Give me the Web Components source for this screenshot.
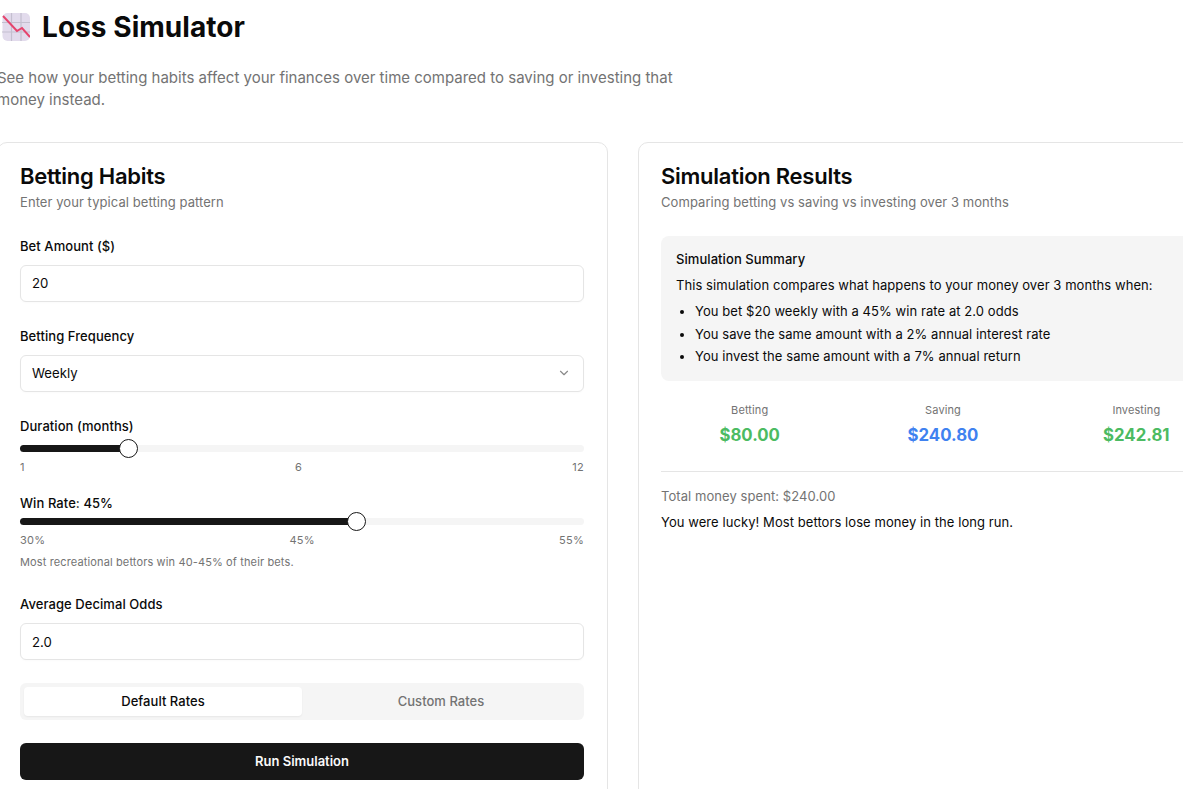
<!DOCTYPE html>
<html>
<head>
<meta charset="utf-8">
<title>Loss Simulator</title>
<style>
    html, body { margin: 0; padding: 0; background: #fff; overflow: hidden; height: 100%; }
    body { font-family: Inter, "Noto Sans", sans-serif; color: #0a0a0a; }
</style>
</head>
<body>
<loss-app></loss-app>

<script>
// small helper so every element below stays short
const shadow = (el, html) => {
    el.attachShadow({mode: 'open'}).innerHTML = html;
};

class LossHeader extends HTMLElement {
    constructor() {
        super();
        shadow(this, `
            <style>
                :host { display: block; }
                .title { display: flex; align-items: center; gap: 12px; height: 28px; padding-left: 5px; margin: 0; }
                h1 { font-size: 28px; line-height: 28px; font-weight: 700; margin: 0; letter-spacing: 0.05px; }
                svg { display: block; flex: none; }
                p { width: 700px; margin: 26px 0 0; font-size: 15px; line-height: 22px; color: #737373; }
            </style>
            <div class="title">
                <svg width="28" height="28" viewBox="0 0 28 28">
                    <rect x="0.5" y="0" width="27.5" height="28" rx="5" fill="#e2dbec"/>
                    <path d="M9.5 0V28M19 0V28M0 9.5H28M0 19H28" stroke="#c4bfcf" stroke-width="1.2"/>
                    <path d="M1 3L15 18L20 15L28 24" fill="none" stroke="#e5446d" stroke-width="2"/>
                </svg>
                <h1>Loss Simulator</h1>
            </div>
            <p>See how your betting habits affect your finances over time compared to saving or investing that money instead.</p>
        `);
    }
}

class LossCard extends HTMLElement {
    constructor() {
        super();
        shadow(this, `
            <style>
                :host { display: block; box-sizing: border-box; height: 720px; border: 1px solid #e5e5e5; border-radius: 10px; padding: 21px 23px 21px 22px; background: #fff; }
                h2 { font-size: 22px; line-height: 24px; font-weight: 600; margin: 0; letter-spacing: -0.26px; }
                p { font-size: 13px; line-height: 20px; color: #737373; margin: 4px 0 0; letter-spacing: 0.07px; }
                .body { margin-top: 24px; }
            </style>
            <h2><slot name="title"></slot></h2>
            <p><slot name="sub"></slot></p>
            <div class="body"><slot></slot></div>
        `);
    }
}

class LossField extends HTMLElement {
    constructor() {
        super();
        shadow(this, `
            <style>
                :host { display: block; margin-bottom: 24px; }
                label { display: block; font-size: 13px; line-height: 20px; font-weight: 500; margin-bottom: 9px; letter-spacing: 0.07px; }
                .box { box-sizing: border-box; height: 37px; border: 1px solid #e5e5e5; border-radius: 6px; padding: 0 11px var(--box-drop, 1px); display: flex; align-items: center; justify-content: space-between; font-size: 13.2px; background: #fff; box-shadow: 0 1px 2px rgba(0,0,0,0.02); }
                svg { display: block; margin-right: 1px; }
            </style>
            <label>${this.getAttribute('label')}</label>
            <div class="box"><span>${this.getAttribute('value')}</span>${this.hasAttribute('select') ? `
                <svg width="14" height="14" viewBox="0 0 24 24" fill="none" stroke="#8a8a8a" stroke-width="2" stroke-linecap="round" stroke-linejoin="round"><path d="m6 9 6 6 6-6"/></svg>` : ''}</div>
        `);
    }
}

class LossSlider extends HTMLElement {
    constructor() {
        super();
        const pct = this.getAttribute('pct');
        const above = this.getAttribute('above');
        const below = this.getAttribute('below');
        const ticks = this.getAttribute('ticks').split(',').map(t => `<span>${t}</span>`).join('');
        shadow(this, `
            <style>
                :host { display: block; }
                label { display: block; font-size: 13px; line-height: 20px; font-weight: 500; letter-spacing: 0.07px; }
                .track { position: relative; height: 7px; border-radius: 4px; background: #f5f5f5; margin-top: ${above}px; }
                .fill { height: 100%; width: ${pct}; border-radius: 4px 0 0 4px; background: #171717; }
                .thumb { position: absolute; left: ${pct}; top: 50%; width: 19px; height: 19px; box-sizing: border-box; margin: -9.5px 0 0 -9.5px; border-radius: 50%; background: #fff; border: 1.5px solid #171717; }
                .ticks { display: flex; justify-content: space-between; font-size: 11px; line-height: 14px; color: #737373; margin-top: ${below}px; letter-spacing: 0.3px; }
            </style>
            <label>${this.getAttribute('label')}</label>
            <div class="track"><div class="fill"></div><div class="thumb"></div></div>
            <div class="ticks">${ticks}</div>
            <slot></slot>
        `);
    }
}

class LossTabs extends HTMLElement {
    constructor() {
        super();
        shadow(this, `
            <style>
                :host { display: flex; box-sizing: border-box; height: 37px; padding: 4px; border-radius: 6px; background: #f5f5f5; font-size: 13px; font-weight: 500; margin-top: 23px; letter-spacing: 0.04px; }
                div { flex: 1; display: flex; align-items: center; justify-content: center; border-radius: 4px; color: #737373; padding-bottom: 1px; }
                .on { background: #fff; color: #0a0a0a; box-shadow: 0 1px 2px rgba(0,0,0,0.06); }
            </style>
            <div class="on">Default Rates</div>
            <div>Custom Rates</div>
        `);
    }
}

class LossButton extends HTMLElement {
    constructor() {
        super();
        shadow(this, `
            <style>
                :host { display: flex; align-items: center; justify-content: center; box-sizing: border-box; height: 37px; margin-top: 23px; padding-bottom: 1px; border-radius: 6px; background: #171717; color: #fafafa; font-size: 13px; font-weight: 600; }
            </style>
            <slot></slot>
        `);
    }
}

class LossSummary extends HTMLElement {
    constructor() {
        super();
        shadow(this, `
            <style>
                :host { display: block; box-sizing: border-box; height: 145px; border-radius: 8px; background: #f5f5f5; padding: 14px 15px; font-size: 13px; letter-spacing: 0.07px; }
                h3 { font-size: 13px; line-height: 18px; font-weight: 500; margin: 0 0 8px; }
                p { line-height: 18px; margin: 0 0 8px; }
                ul { margin: 0; padding: 0 0 0 19px; }
                li { line-height: 18px; margin-bottom: 4.5px; }
            </style>
            <h3>Simulation Summary</h3>
            <p>This simulation compares what happens to your money over 3 months when:</p>
            <ul>
                <li>You bet $20 weekly with a 45% win rate at 2.0 odds</li>
                <li>You save the same amount with a 2% annual interest rate</li>
                <li>You invest the same amount with a 7% annual return</li>
            </ul>
        `);
    }
}

class LossStat extends HTMLElement {
    constructor() {
        super();
        shadow(this, `
            <style>
                :host { display: block; text-align: center; }
                div { font-size: 11px; line-height: 16px; color: #737373; letter-spacing: 0.1px; }
                b { display: block; font-size: 16.8px; line-height: 24px; font-weight: 700; margin-top: 5px; color: ${this.getAttribute('color')}; }
            </style>
            <div>${this.getAttribute('label')}</div>
            <b>${this.getAttribute('value')}</b>
        `);
    }
}

class LossResults extends HTMLElement {
    constructor() {
        super();
        shadow(this, `
            <style>
                :host { display: block; }
                .stats { display: grid; grid-template-columns: repeat(3, 1fr); gap: 16px; margin-top: 21px; padding-bottom: 24px; border-bottom: 1px solid #e5e5e5; }
                .spent { font-size: 13px; line-height: 20px; color: #737373; margin: 14px 0 0; letter-spacing: 0.07px; }
                .note { font-size: 13px; line-height: 20px; margin: 6px 0 0; letter-spacing: 0.07px; }
            </style>
            <loss-summary></loss-summary>
            <div class="stats">
                <loss-stat label="Betting" value="$80.00" color="#4cbb62"></loss-stat>
                <loss-stat label="Saving" value="$240.80" color="#3f82f0"></loss-stat>
                <loss-stat label="Investing" value="$242.81" color="#4cbb62"></loss-stat>
            </div>
            <p class="spent">Total money spent: $240.00</p>
            <p class="note">You were lucky! Most bettors lose money in the long run.</p>
        `);
    }
}

class LossApp extends HTMLElement {
    constructor() {
        super();
        shadow(this, `
            <style>
                :host { display: block; width: 1252px; margin-left: -3px; padding-top: 13px; }
                .cols { display: grid; grid-template-columns: 611px 611px; gap: 30px; margin-top: 31px; }
                .note { font-size: 11px; line-height: 16px; color: #737373; margin-top: 7px; letter-spacing: 0.13px; }
                .spacer { height: 24px; }
                .gap { height: 19px; }
            </style>
            <loss-header></loss-header>
            <div class="cols">
                <loss-card>
                    <span slot="title">Betting Habits</span>
                    <span slot="sub">Enter your typical betting pattern</span>
                    <loss-field label="Bet Amount ($)" value="20"></loss-field>
                    <loss-field label="Betting Frequency" value="Weekly" select></loss-field>
                    <loss-slider label="Duration (months)" pct="19.2%" above="9" below="8" ticks="1,6,12"></loss-slider>
                    <div class="gap"></div>
                    <loss-slider label="Win Rate: 45%" pct="59.6%" above="5" below="8" ticks="30%,45%,55%">
                        <div class="note">Most recreational bettors win 40-45% of their bets.</div>
                    </loss-slider>
                    <div class="spacer"></div>
                    <loss-field label="Average Decimal Odds" value="2.0" style="margin-bottom:0; --box-drop:0px"></loss-field>
                    <loss-tabs></loss-tabs>
                    <loss-button>Run Simulation</loss-button>
                </loss-card>
                <loss-card>
                    <span slot="title">Simulation Results</span>
                    <span slot="sub">Comparing betting vs saving vs investing over 3 months</span>
                    <loss-results></loss-results>
                </loss-card>
            </div>
        `);
    }
}

// children first so the upgrades run in a sensible order
customElements.define('loss-header', LossHeader);
customElements.define('loss-card', LossCard);
customElements.define('loss-field', LossField);
customElements.define('loss-slider', LossSlider);
customElements.define('loss-tabs', LossTabs);
customElements.define('loss-button', LossButton);
customElements.define('loss-summary', LossSummary);
customElements.define('loss-stat', LossStat);
customElements.define('loss-results', LossResults);
customElements.define('loss-app', LossApp);
</script>
</body>
</html>
